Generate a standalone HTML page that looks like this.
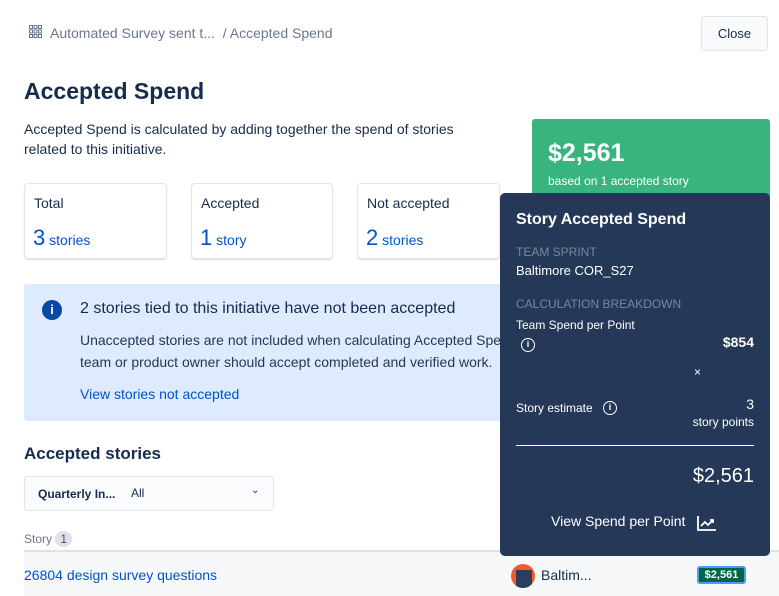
<!DOCTYPE html>
<html><head><style>
*{box-sizing:border-box;margin:0;padding:0}
body{width:779px;height:596px;overflow:hidden;background:#fff;font-family:"Liberation Sans",sans-serif;color:#172B4D;position:relative}
.a{position:absolute}
.card{position:absolute;top:183px;height:76px;border:1px solid #E3E5E9;border-radius:4px;box-shadow:0 1px 1px rgba(9,30,66,.15)}
.card .l{position:absolute;left:9px;top:11px;font-size:14px}
.card .v{position:absolute;left:8px;top:41px;color:#0052CC;font-size:14px}
.card .v b{font-size:22px;font-weight:normal}
</style></head><body>
<div class="a" style="left:29px;top:25px;width:13px;height:13px">
<svg width="13" height="13" viewBox="0 0 13 13" fill="none" stroke="#6B778C" stroke-width="1"><rect x=".5" y=".5" width="3" height="3"/><rect x="5" y=".5" width="3" height="3"/><rect x="9.5" y=".5" width="3" height="3"/><rect x=".5" y="5" width="3" height="3"/><rect x="5" y="5" width="3" height="3"/><rect x="9.5" y="5" width="3" height="3"/><rect x=".5" y="9.5" width="3" height="3"/><rect x="5" y="9.5" width="3" height="3"/><rect x="9.5" y="9.5" width="3" height="3"/></svg></div>
<div class="a" style="left:50px;top:25px;font-size:14px;color:#6B778C">Automated Survey sent t...&nbsp;&nbsp;/ Accepted Spend</div>
<div class="a" style="left:701px;top:16px;width:67px;height:35px;border:1px solid #E3E5E9;border-radius:3px;background:#F9FAFB;font-size:13px;text-align:center;line-height:33px">Close</div>
<div class="a" style="left:24px;top:78px;font-size:23px;font-weight:bold">Accepted Spend</div>
<div class="a" style="left:24px;top:119px;font-size:14px;line-height:20px;width:480px">Accepted Spend is calculated by adding together the spend of stories<br>related to this initiative.</div>
<div class="a" style="left:532px;top:119px;width:238px;height:90px;background:#3AB47E;border-radius:3px;color:#fff">
<div class="a" style="left:16px;top:20px;font-size:25px;font-weight:bold">$2,561</div>
<div class="a" style="left:16px;top:55px;font-size:12px">based on 1 accepted story</div></div>
<div class="card" style="left:24px;width:143px"><div class="l">Total</div><div class="v"><b>3</b> stories</div></div>
<div class="card" style="left:191px;width:142px"><div class="l">Accepted</div><div class="v"><b>1</b> story</div></div>
<div class="card" style="left:357px;width:143px"><div class="l">Not accepted</div><div class="v"><b>2</b> stories</div></div>
<div class="a" style="left:24px;top:284px;width:500px;height:137px;background:#DEEBFF;border-radius:3px;overflow:hidden">
<div class="a" style="left:18px;top:16px;width:20px;height:20px;border-radius:50%;background:#0747A6;color:#fff;font-size:13px;font-weight:bold;text-align:center;line-height:20px">i</div>
<div class="a" style="left:56px;top:16px;font-size:16px;white-space:nowrap">2 stories tied to this initiative have not been accepted</div>
<div class="a" style="left:56px;top:45px;font-size:14px;line-height:22px;white-space:nowrap;color:#253858">Unaccepted stories are not included when calculating Accepted Spend. The<br>team or product owner should accept completed and verified work.</div>
<div class="a" style="left:56px;top:102px;font-size:14px;color:#0052CC">View stories not accepted</div></div>
<div class="a" style="left:24px;top:444px;font-size:17px;font-weight:bold">Accepted stories</div>
<div class="a" style="left:24px;top:476px;width:250px;height:35px;border:1px solid #E3E5E9;border-radius:3px;background:#FAFBFC">
<div class="a" style="left:13px;top:10px;font-size:12px;font-weight:bold">Quarterly In...</div>
<div class="a" style="left:106px;top:9px;font-size:12px">All</div>
<div class="a" style="left:226px;top:8px;font-size:10px">&#8964;</div></div>
<div class="a" style="left:24px;top:531px;font-size:12px;color:#6B778C">Story <span style="display:inline-block;background:#DFE1E6;border-radius:8px;padding:1px 5px;color:#42526E">1</span></div>
<div class="a" style="left:24px;top:550px;width:755px;height:2px;background:#DFE1E6"></div>
<div class="a" style="left:24px;top:552px;width:755px;height:44px;background:#F7F8FA"></div>
<div class="a" style="left:24px;top:567px;font-size:14px;color:#0052CC">26804 design survey questions</div>
<div class="a" style="left:511px;top:564px;width:24px;height:24px;border-radius:50%;background:#F4592D;overflow:hidden"><div class="a" style="left:5px;top:6px;width:16px;height:18px;background:#2C3E5E"></div></div>
<div class="a" style="left:541px;top:567px;font-size:14px">Baltim...</div>
<div class="a" style="left:697px;top:566px;width:49px;height:18px;border:2px solid #4C9AFF;border-radius:3px;background:#006644;color:#fff;font-size:11px;font-weight:bold;text-align:center;line-height:14px">$2,561</div>
<div class="a" style="left:500px;top:193px;width:270px;height:363px;background:#253858;border-radius:5px;color:#fff">
<div class="a" style="left:16px;top:18px;font-size:16px;font-weight:bold">Story Accepted Spend</div>
<div class="a" style="left:16px;top:52px;font-size:12px;color:#7A869A">TEAM SPRINT</div>
<div class="a" style="left:16px;top:70px;font-size:13px">Baltimore COR_S27</div>
<div class="a" style="left:16px;top:104px;font-size:12px;color:#7A869A">CALCULATION BREAKDOWN</div>
<div class="a" style="left:16px;top:125px;font-size:12px">Team Spend per Point</div>
<div class="a" style="left:21px;top:145px;width:14px;height:14px;border:1.5px solid #fff;border-radius:50%;font-size:9px;font-weight:bold;text-align:center;line-height:11px">i</div>
<div class="a" style="right:16px;top:141px;font-size:14px;font-weight:bold">$854</div>
<div class="a" style="left:194px;top:172px;font-size:12px">×</div>
<div class="a" style="left:16px;top:208px;font-size:12px">Story estimate</div>
<div class="a" style="left:103px;top:208px;width:14px;height:14px;border:1.5px solid #fff;border-radius:50%;font-size:9px;font-weight:bold;text-align:center;line-height:11px">i</div>
<div class="a" style="right:16px;top:203px;font-size:14px;text-align:right">3</div>
<div class="a" style="right:16px;top:222px;font-size:12px">story points</div>
<div class="a" style="left:16px;top:252px;width:238px;height:1px;background:#fff"></div>
<div class="a" style="right:16px;top:272px;font-size:20px">$2,561</div>
<div class="a" style="left:51px;top:320px;font-size:14px">View Spend per Point</div>
<svg class="a" style="left:197px;top:322px" width="20" height="16" viewBox="0 0 20 16" fill="none" stroke="#fff" stroke-width="1.8"><path d="M1 1v14h18"/><path d="M4 11l4-4 3 3 5-5M13 5h3v3"/></svg>
</div>
</body></html>
